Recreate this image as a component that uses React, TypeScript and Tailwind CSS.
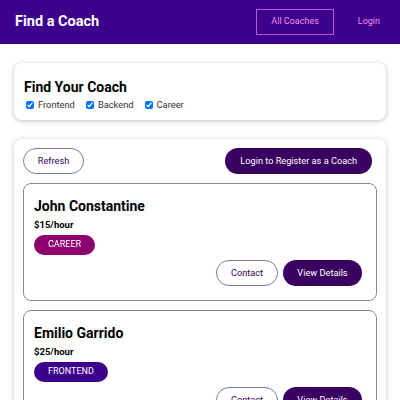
import React from 'react';

const coaches = [
  { name: 'John Constantine', rate: 15, area: 'CAREER' },
  { name: 'Emilio Garrido', rate: 25, area: 'FRONTEND' },
];

const badgeColor = (area: string) => {
  if (area === 'CAREER') return 'bg-[#8d006e]';
  if (area === 'BACKEND') return 'bg-[#71008d]';
  return 'bg-[#3d008d]';
};

const App = () => {
  return (
    <div className="w-full h-screen bg-white font-['Roboto',sans-serif] overflow-hidden">
      <header className="h-[44px] bg-[#3d008d] flex items-center justify-between pl-[15px] pr-[5px]">
        <h1 className="text-white font-bold text-[14.5px] leading-none">Find a Coach</h1>
        <ul className="flex items-center gap-[9px]">
          <li>
            <a className="h-[26px] px-[14px] flex items-center border border-[#b85ad4] text-[#f391e3] text-[9px]">All Coaches</a>
          </li>
          <li>
            <a className="h-[26px] px-[14px] flex items-center border border-transparent text-[#f391e3] text-[9px]">Login</a>
          </li>
        </ul>
      </header>

      <div className="mx-[14px]">
        <section className="mt-[19px] rounded-[8px] shadow-[0_1px_5px_rgba(0,0,0,0.25)] px-[10px] pt-[14px] pb-[8px]">
          <h2 className="text-[14px] leading-[20px] font-bold text-black">Find Your Coach</h2>
          <div className="flex items-center h-[14px] mt-[1px] text-[9.3px] text-[#333]">
            <label className="flex items-center ml-[2px] mr-[11px]">
              <input type="checkbox" defaultChecked className="w-[8px] h-[8px] m-0 mr-[4px]" />
              Frontend
            </label>
            <label className="flex items-center mr-[11px]">
              <input type="checkbox" defaultChecked className="w-[8px] h-[8px] m-0 mr-[4px]" />
              Backend
            </label>
            <label className="flex items-center">
              <input type="checkbox" defaultChecked className="w-[8px] h-[8px] m-0 mr-[4px]" />
              Career
            </label>
          </div>
        </section>

        <section className="mt-[19px] rounded-[8px] shadow-[0_1px_5px_rgba(0,0,0,0.25)] p-[9px]">
          <div className="flex justify-between items-center">
            <button className="h-[26px] w-[61px] rounded-full border border-[#8e73a3] text-[#3a0061] text-[9.2px]">Refresh</button>
            <button className="h-[26px] px-[15px] mr-[5px] rounded-full bg-[#3a0061] text-white text-[9.2px]">Login to Register as a Coach</button>
          </div>
          <ul>
            {coaches.map((c) => (
              <li key={c.name} className="mt-[9px] border border-[#8a8a8a] rounded-[8px] px-[10px] pt-[12px] pb-[14px]">
                <h3 className="text-[14px] leading-[20px] font-bold text-black">{c.name}</h3>
                <h4 className="mt-[2px] text-[9.5px] leading-[14px] font-bold text-black">${c.rate}/hour</h4>
                <div className="flex mt-[3px]">
                  <span className={`flex items-center h-[20px] px-[14px] rounded-full text-white text-[9px] ${badgeColor(c.area)}`}>{c.area}</span>
                </div>
                <div className="flex justify-end gap-[5px] mt-[5px] pr-[4px]">
                  <button className="h-[26px] w-[62px] rounded-full border border-[#8e73a3] text-[#3a0061] text-[9.2px]">Contact</button>
                  <button className="h-[26px] w-[79px] rounded-full bg-[#3a0061] text-white text-[9.2px]">View Details</button>
                </div>
              </li>
            ))}
          </ul>
        </section>
      </div>
    </div>
  );
};

export default App;
